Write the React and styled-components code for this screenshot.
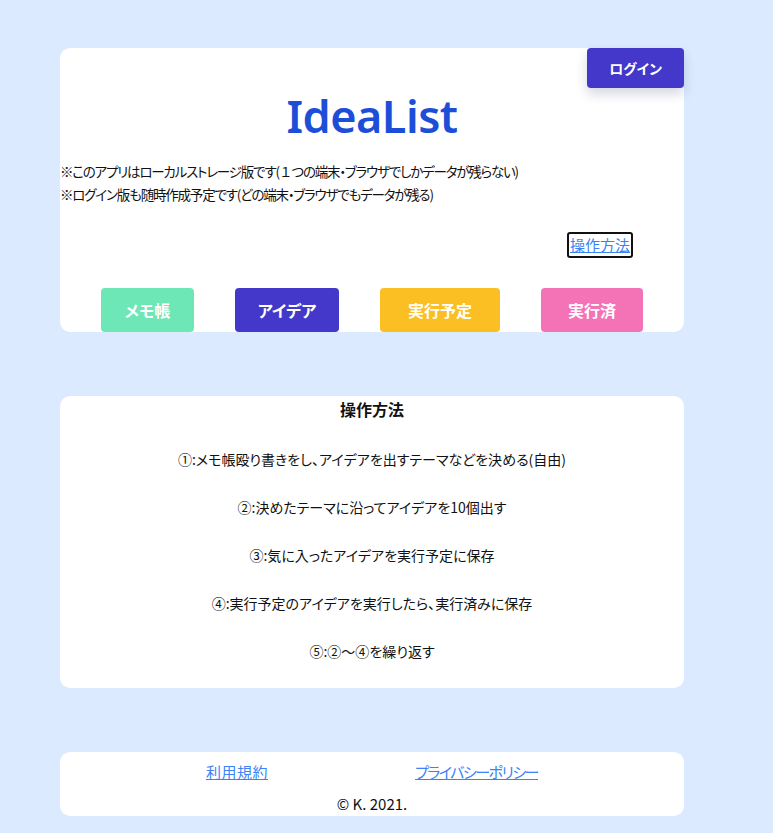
import styled, { createGlobalStyle } from 'styled-components'

const GlobalStyle = createGlobalStyle`
   html, body {
      margin: 0;
      padding: 0;
      background: #dbeafe;
      font-family: 'Noto Sans CJK JP', 'Noto Sans', sans-serif;
      font-feature-settings: 'palt';
      color: #111;
   }
`

const Page = styled.div`
   width: 624px;
   margin-left: 60px;
   padding: 48px 0 17px;
   display: flex;
   flex-direction: column;
   gap: 64px;
`

const Card = styled.section`
   position: relative;
   background: #fff;
   border-radius: 10px;
`

const LoginButton = styled.button`
   position: absolute;
   top: 0;
   right: 0;
   width: 97px;
   height: 40px;
   border: none;
   border-radius: 4px;
   background: #4338ca;
   color: #fff;
   font-family: inherit;
   font-feature-settings: 'palt';
   font-weight: 700;
   font-size: 14px;
   box-shadow: 0 6px 12px rgba(30, 40, 90, 0.18);
`

const Title = styled.h1`
   margin: 0;
   padding-top: 38px;
   height: 72px;
   text-align: center;
   font-family: 'Noto Sans', 'Open Sans', sans-serif;
   font-weight: 600;
   font-size: 45px;
   line-height: 60px;
   letter-spacing: -0.5px;
   color: #1d4ed8;
`

const Notes = styled.div`
   margin-top: 2px;
   font-size: 13.5px;
   line-height: 23px;
   letter-spacing: -1.2px;
`

const LinkRow = styled.div`
   display: flex;
   justify-content: flex-end;
   padding: 26px 51px 0 0;
`

const HowLink = styled.a`
   display: inline-block;
   color: #3b82f6;
   font-size: 15px;
   line-height: 20px;
   padding: 1px 1px;
   border: 2px solid #111;
   border-radius: 3px;
   text-decoration: underline;
`

const ButtonRow = styled.div`
   display: flex;
   justify-content: space-evenly;
   margin-top: 30px;
`

const CategoryButton = styled.button`
   width: ${p => p.$w}px;
   height: 44px;
   border: none;
   border-radius: 4px;
   background: ${p => p.$bg};
   color: #fff;
   font-family: inherit;
   font-feature-settings: 'palt';
   font-weight: 700;
   font-size: 16px;
`

const HowCard = styled(Card)`
   padding: 2px 0 27px;
   text-align: center;
`

const HowTitle = styled.h2`
   margin: 0;
   font-size: 16px;
   font-weight: 700;
   line-height: 22px;
`

const Steps = styled.ul`
   list-style: none;
   margin: 0;
   padding: 29px 0 0;
   display: flex;
   flex-direction: column;
   gap: 28px;
   font-size: 14px;
   line-height: 20px;
`

const Footer = styled(Card)`
   padding: 10px 0 2px;
   text-align: center;
`

const FooterLinks = styled.div`
   display: flex;
   justify-content: center;
   gap: 147px;
`

const FooterLink = styled.a`
   color: #3b82f6;
   font-size: 15px;
   line-height: 20px;
   letter-spacing: ${p => p.$tight ? '-1.5px' : '0.5px'};
   text-decoration: underline;
`

const Copy = styled.p`
   margin: 12px 0 0;
   font-size: 15px;
   line-height: 20px;
`

const categories = [
   { label: 'メモ帳', bg: '#6ee7b7', w: 93 },
   { label: 'アイデア', bg: '#4338ca', w: 104 },
   { label: '実行予定', bg: '#fbbf24', w: 120 },
   { label: '実行済', bg: '#f472b6', w: 102 },
]

const steps = [
   '①:メモ帳殴り書きをし、アイデアを出すテーマなどを決める(自由)',
   '②:決めたテーマに沿ってアイデアを10個出す',
   '③:気に入ったアイデアを実行予定に保存',
   '④:実行予定のアイデアを実行したら、実行済みに保存',
   '⑤:②〜④を繰り返す',
]

export default function App() {
   return (
      <>
         <GlobalStyle />
         <Page>
            <Card>
               <LoginButton>ログイン</LoginButton>
               <Title>IdeaList</Title>
               <Notes>
                  <div>※このアプリはローカルストレージ版です( １ つの端末・ブラウザでしかデータが残らない)</div>
                  <div>※ログイン版も随時作成予定です(どの端末・ブラウザでもデータが残る)</div>
               </Notes>
               <LinkRow>
                  <HowLink href="#how">操作方法</HowLink>
               </LinkRow>
               <ButtonRow>
                  {categories.map(c => (
                     <CategoryButton key={c.label} $bg={c.bg} $w={c.w}>
                        {c.label}
                     </CategoryButton>
                  ))}
               </ButtonRow>
            </Card>
            <HowCard id="how">
               <HowTitle>操作方法</HowTitle>
               <Steps>
                  {steps.map(s => (
                     <li key={s}>{s}</li>
                  ))}
               </Steps>
            </HowCard>
            <Footer>
               <FooterLinks>
                  <FooterLink href="#terms">利用規約</FooterLink>
                  <FooterLink href="#privacy" $tight>プライバシーポリシー</FooterLink>
               </FooterLinks>
               <Copy>© K. 2021.</Copy>
            </Footer>
         </Page>
      </>
   )
}
